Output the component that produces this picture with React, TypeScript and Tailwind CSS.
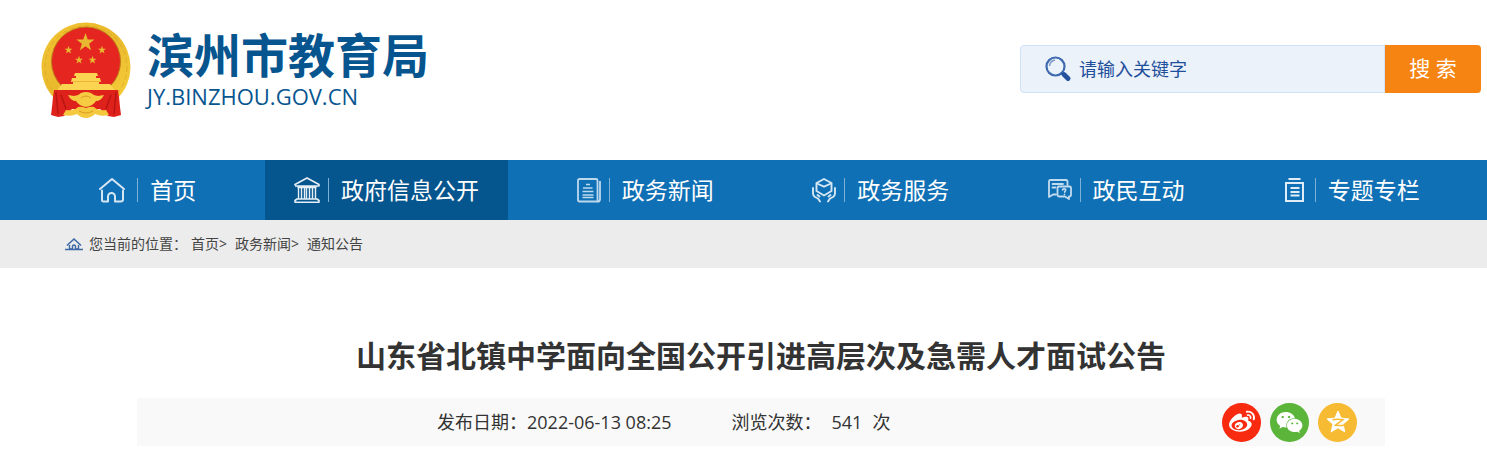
import React from 'react';
import { FaWeibo, FaWeixin } from 'react-icons/fa';

const starPoints = (cx: number, cy: number, r: number, inner = 0.4) =>
  Array.from({ length: 10 }, (_, i) => {
    const radius = i % 2 === 0 ? r : r * inner;
    const angle = (Math.PI / 5) * i - Math.PI / 2;
    return `${(cx + radius * Math.cos(angle)).toFixed(2)},${(cy + radius * Math.sin(angle)).toFixed(2)}`;
  }).join(' ');

const Emblem: React.FC = () => (
  <svg viewBox="0 0 90 96" className="h-24 w-[90px] shrink-0" aria-hidden="true">
    <defs>
      <linearGradient id="gold" x1="0" y1="0" x2="1" y2="1">
        <stop offset="0" stopColor="#f2c431" />
        <stop offset="0.5" stopColor="#e9b82d" />
        <stop offset="1" stopColor="#f8d23c" />
      </linearGradient>
    </defs>
    <circle cx="45" cy="45" r="44.5" fill="url(#gold)" />
    <circle cx="45" cy="45" r="41" fill="none" stroke="#dfae28" strokeWidth="1" strokeDasharray="5 3" />
    <circle cx="45" cy="39.5" r="34.5" fill="#e52620" stroke="#bd7b18" strokeWidth="1" />
    <g fill="#e8b830">
      <polygon points={starPoints(44.5, 20.5, 9.5)} />
      <polygon points={starPoints(27.5, 28, 4.2)} />
      <polygon points={starPoints(61, 28, 4.2)} />
      <polygon points={starPoints(38, 38, 4.2)} />
      <polygon points={starPoints(51.5, 38, 4.2)} />
    </g>
    <path
      d="M34 51h22l1 3h-2v2h4l1 4h-2v2h11l4 5v2H17v-2l4-5h11v-2h-2l1-4h4v-2h-2z"
      fill="#fbd451"
    />
    <path d="M31 59.5h28" stroke="#eeb53a" strokeWidth="1" />
    <path d="M13 68h64l1 7 1 10 1 8-7 2-6-1-8-7H31l-8 7-6 1-7-2 1-8 1-10z" fill="#df211c" />
    <path
      d="M33 74q4 0 7-3 5-2 10 0 3 3 7 3l6-1q-3 6-8 6-3 5-10 6-7-1-10-6-5 0-8-6z"
      fill="#f6cc43"
    />
    <path d="M25 88q8 1 12-3 3-1 8 1 5-2 8-1 4 4 12 3l3 5q-8 2-14-1-4 4-9 4t-9-4q-6 3-14 1z" fill="#f5c93d" />
    <path d="M15 70l2 22M20 73l5 14M75 70l-2 22M70 73l-5 14" stroke="#b81613" strokeWidth="1.5" />
    <path d="M40 76q5-4 10 0M38 89q7 4 14 0" fill="none" stroke="#d99a24" strokeWidth="1" />
  </svg>
);

const HomeIcon = () => (
  <svg viewBox="0 0 26 26" className="mr-1 size-[26px]" fill="none" stroke="#d5e6f3" strokeWidth="2" strokeLinecap="round" strokeLinejoin="round">
    <path d="M1 12L13 2l12 10" />
    <path d="M3 13.500V23q0 1.500 1.500 1.500h4.500v-5a3.500 3.500 0 0 1 7 0v5h5.500q2.500 0 2.500-2v-9" />
  </svg>
);

const BankIcon = () => (
  <svg viewBox="0 0 26 26" className="size-[26px]" fill="none" stroke="#e6eff6" strokeWidth="1.6" strokeLinejoin="round">
    <path d="M1 8.500V7.500L13 1l12 6.500v1.500H1M3.500 10.500h19M3 22h20M1 25.200V23.500l2-1.500h20l2 1.500v1.700z" />
    <path d="M4.500 10.500V22M7.500 10.500V22M10.500 10.500V22M12.500 10.500V22M15.500 10.500V22M18.500 10.500V22M21.500 10.500V22" strokeWidth="1.400" />
  </svg>
);

const NewsIcon = () => (
  <svg viewBox="0 0 24 26" className="h-[26px] w-6" fill="none" stroke="#bdd9ee" strokeWidth="1.800" strokeLinejoin="round">
    <path d="M2.500 2H19q1.500 0 1.500 1.500V22q0 2.500 1 2.500H2.500Q1 24.500 1 23V3.500Q1 2 2.500 2z" />
    <path d="M23 4v18q0 2.500-2 2.500" />
    <path d="M9 7.500h4M6 11h9.500M5.500 14.500h11M5.500 18h11M5.500 20.500h11" strokeWidth="1.500" />
  </svg>
);

const ServiceIcon = () => (
  <svg viewBox="0 0 24 26" className="h-[26px] w-6" fill="none" stroke="#d5e7f4" strokeWidth="1.900" strokeLinejoin="round" strokeLinecap="round">
    <path d="M12 2l7.500 4v8L12 18.500 4.500 14V6z" />
    <path d="M5 6.500l7 3.200 7-3.200" />
    <path d="M1 11v5.500q0 2 2 3.500l3 1.500 2 3M5.500 18l2 1.500M23 11v5.500q0 2-2 3.500l-3 1.500-2 3M18.500 18l-2 1.500" />
  </svg>
);

const ChatIcon = () => (
  <svg viewBox="0 0 24 26" className="h-[26px] w-6" fill="none" stroke="#c2dcef" strokeWidth="1.800" strokeLinejoin="round" strokeLinecap="round">
    <path d="M19.500 8V4.500Q19.500 3 18 3H2.500Q1 3 1 4.500V20l4-2.500h3" />
    <path d="M4.500 7h10.500M4.500 10.500h3" />
    <path d="M11 9.500h10.500q1.500 0 1.500 1.500v7q0 1.500-1.500 1.500H21v2.500l-4-2.500h-6Q9.500 19.500 9.500 18v-7q0-1.500 1.500-1.500z" />
    <path d="M14.500 12.800q1-1.300 2.500-.8 1.600 1-.3 2.600v.6M16.500 17.300v.2" strokeWidth="1.600" />
  </svg>
);

const ColumnIcon = () => (
  <svg viewBox="0 0 24 26" className="h-[26px] w-6" fill="none" stroke="#e0edf7" strokeWidth="2">
    <path d="M5.500 2h12M3 6h17v18H3zM7.500 11h9M7.500 15h9M7.500 18.500h9" />
  </svg>
);

const SearchIcon = () => (
  <svg viewBox="0 0 26 26" className="size-[26px] shrink-0" fill="none" aria-hidden="true">
    <circle cx="10.500" cy="10.500" r="9" stroke="#3f6aae" strokeWidth="2.200" />
    <path d="M4.500 10q.5-5 5.500-6" stroke="#7c9bcb" strokeWidth="1.500" />
    <path d="M16.500 17l2 1.500" stroke="#2e5ca5" strokeWidth="2.500" />
    <path d="M19 18.500l4 4" stroke="#24529d" strokeWidth="4.800" strokeLinecap="round" />
  </svg>
);

const CrumbIcon = () => (
  <svg viewBox="0 0 18 14" className="h-3.5 w-[18px]" fill="none" stroke="#3c69a6" aria-hidden="true">
    <path d="M2 8.500L9 2l7 6.500" strokeWidth="1.600" />
    <path d="M4.500 8V12h3V9q1.500-2 3 0v3h3V8" strokeWidth="1.400" />
    <path d="M0 12.500h18" strokeWidth="1.500" />
  </svg>
);

const QzoneIcon = () => (
  <svg viewBox="0 0 24 24" className="size-6" aria-hidden="true">
    <polygon points={starPoints(12, 12.5, 11.5, 0.46)} fill="#fff" stroke="#fff" strokeWidth="1" strokeLinejoin="round" />
    <path d="M6.500 9.700q5-.9 10.500 0L9.500 15.200q4.500.9 9.500-.2" fill="none" stroke="#f6bb32" strokeWidth="1.500" />
  </svg>
);

const navItems = [
  { label: '首页', icon: <HomeIcon /> },
  { label: '政府信息公开', icon: <BankIcon />, active: true },
  { label: '政务新闻', icon: <NewsIcon />, spaced: true },
  { label: '政务服务', icon: <ServiceIcon /> },
  { label: '政民互动', icon: <ChatIcon /> },
  { label: '专题专栏', icon: <ColumnIcon /> },
];

const Header: React.FC = () => (
  <header className="flex items-start justify-between pt-[22px] pr-1.5 pb-[42px] pl-[41px]">
    <a href="#" className="flex text-[#07558f]">
      <Emblem />
      <span className="ml-4 flex flex-col pt-1">
        <span className="text-[47px] leading-[58px] font-bold">滨州市教育局</span>
        <span className="text-[22px] leading-6">JY.BINZHOU.GOV.CN</span>
      </span>
    </a>
    <form className="mt-[23px] flex h-12" onSubmit={(e) => e.preventDefault()}>
      <label className="flex w-[365px] items-center gap-2 rounded-l border border-[#cfe2fa] bg-[#ebf2fa] pl-6">
        <SearchIcon />
        <input
          type="text"
          aria-label="请输入关键字"
          placeholder="请输入关键字"
          className="min-w-0 flex-1 bg-transparent text-lg text-[#1f4e9b] outline-none placeholder:text-[#1f4e9b]"
        />
      </label>
      <button type="submit" className="w-24 rounded-r bg-[#f68412] text-[21px] text-white">
        搜 索
      </button>
    </form>
  </header>
);

const NavBar: React.FC = () => (
  <nav className="bg-[#1070b5] pr-[18px] pl-[30px]">
    <ul className="grid grid-cols-[235fr_242fr_255fr_235fr_235fr_235fr]">
      {navItems.map((item) => (
        <li key={item.label} className={item.spaced ? 'pl-5' : ''}>
          <a
            href="#"
            className={`flex h-15 items-center justify-center text-[23px] whitespace-nowrap text-white ${item.active ? 'bg-[#05558e]' : ''}`}
          >
            {item.icon}
            <span className="mr-3 ml-2 h-6 w-px bg-[#7fb1d8]" />
            {item.label}
          </a>
        </li>
      ))}
    </ul>
  </nav>
);

const Breadcrumb: React.FC = () => (
  <div className="flex h-12 items-center bg-[#ececec] pl-[65px] text-sm text-[#444]">
    <CrumbIcon />
    <span className="ml-1.5">您当前的位置：</span>
    <a href="#" className="ml-1">首页&gt;</a>
    <a href="#" className="ml-2">政务新闻&gt;</a>
    <a href="#" className="ml-2">通知公告</a>
  </div>
);

const App: React.FC = () => {
  return (
    <div className="min-h-screen bg-white font-['Open_Sans','Noto_Sans_CJK_SC',sans-serif]">
      <Header />
      <NavBar />
      <Breadcrumb />
      <main className="pt-16 pr-[102px] pl-[137px]">
        <h1 className="text-center text-[30px] leading-12 font-bold text-[#333]">
          山东省北镇中学面向全国公开引进高层次及急需人才面试公告
        </h1>
        <div className="mt-[18px] flex h-12 items-center bg-[#f9f9f9] pl-[300px] text-lg text-[#333]">
          <span>发布日期：2022-06-13 08:25</span>
          <span className="ml-15">浏览次数：</span>
          <span className="ml-2.5">541</span>
          <span className="ml-2.5">次</span>
          <div className="mr-7 ml-auto flex gap-[9px] text-white">
            <button type="button" aria-label="微博" className="flex size-[39px] items-center justify-center rounded-full bg-[#f82a10]">
              <FaWeibo className="size-[26px]" />
            </button>
            <button type="button" aria-label="微信" className="flex size-[39px] items-center justify-center rounded-full bg-[#5bb53a]">
              <FaWeixin className="size-[27px]" />
            </button>
            <button type="button" aria-label="QQ空间" className="flex size-[39px] items-center justify-center rounded-full bg-[#f6bb32]">
              <QzoneIcon />
            </button>
          </div>
        </div>
      </main>
    </div>
  );
};

export default App;
